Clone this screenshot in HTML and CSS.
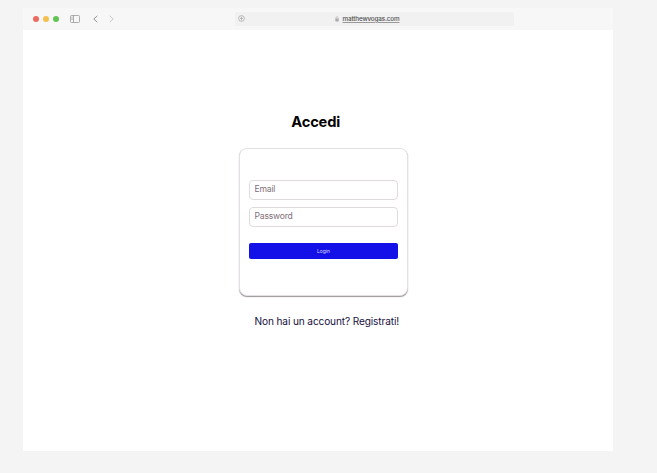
FILE: index.html
```html
<!DOCTYPE html>
<html lang="it">
<head>
<meta charset="utf-8">
<title>Accedi</title>
<link rel="stylesheet" href="styles.css">
</head>
<body>
<div class="window">
  <header class="toolbar">
    <div class="controls">
      <span class="dot red"></span><span class="dot yellow"></span><span class="dot green"></span>
      <svg class="sidebar-icon" width="10" height="8" viewBox="0 0 10 8" fill="none" stroke="#999" stroke-width=".8"><rect x=".5" y=".5" width="9" height="7" rx="1"/><path d="M3.5 .5v7M1.5 2h1M1.5 3.3h1M1.5 4.6h1"/></svg>
      <svg class="back-icon" width="5" height="8" viewBox="0 0 5 8" fill="none" stroke="#888" stroke-width=".9"><path d="M4.3 .8L.8 4l3.5 3.2"/></svg>
      <svg class="forward-icon" width="5" height="8" viewBox="0 0 5 8" fill="none" stroke="#c4c4c4" stroke-width=".9"><path d="M.7 .8L4.2 4 .7 7.2"/></svg>
    </div>
    <div class="address">
      <svg class="shield-icon" width="7" height="7" viewBox="0 0 7 7" fill="none" stroke="#999" stroke-width=".6"><circle cx="3.5" cy="3.5" r="2.9"/><path d="M3.5 1.7v3.6M2 3.4h3"/></svg>
      <svg class="lock-icon" width="4" height="6" viewBox="0 0 4 6"><path d="M1 2.8V1.7a1 1 0 0 1 2 0v1.1" fill="none" stroke="#aaa" stroke-width=".6"/><rect x=".3" y="2.6" width="3.4" height="2.8" rx=".4" fill="#aaa"/></svg>
      <span class="domain">matthewvogas.com</span>
    </div>
  </header>
  <main class="page">
    <h1>Accedi</h1>
    <form class="card">
      <input type="email" placeholder="Email">
      <input type="password" placeholder="Password">
      <button type="button">Login</button>
    </form>
    <p class="register">Non hai un account? Registrati!</p>
  </main>
</div>
</body>
</html>
```
FILE: styles.css
```css
* { box-sizing: border-box; }
body {
  margin: 0;
  height: 473px;
  padding: 8px 0 0 23px;
  overflow: hidden;
  background: #f4f4f4;
  font-family: Inter, sans-serif;
}
.window {
  width: 589.5px;
  height: 443px;
  background: #fff;
  border-radius: 3px 3px 0 0;
  overflow: hidden;
}
.toolbar {
  display: flex;
  height: 22px;
  padding-top: 4px;
  background: #f7f7f7;
}
.controls {
  display: flex;
  align-items: center;
  width: 211.5px;
  height: 14px;
  padding-left: 9.5px;
}
.dot {
  width: 6px;
  height: 6px;
  margin-right: 4px;
  border-radius: 50%;
}
.red { background: #ed6a5e; }
.yellow { background: #f4bf4f; }
.green { background: #61c554; }
.sidebar-icon { margin-left: 7.5px; }
.back-icon { margin-left: 12.5px; }
.forward-icon { margin-left: 11.5px; }
.address {
  display: flex;
  align-items: center;
  width: 279px;
  height: 13.5px;
  padding-left: 3.5px;
  border-radius: 2px;
  background: #f1f1f1;
}
.lock-icon { margin-left: 90px; }
.domain {
  margin-left: 3.5px;
  font-size: 6.3px;
  font-weight: 500;
  line-height: 8px;
  letter-spacing: -0.13px;
  color: #4c4c4c;
  text-decoration: underline;
  text-decoration-color: #999;
  text-decoration-thickness: 0.5px;
  text-underline-offset: 1px;
  white-space: nowrap;
}
.page { padding: 82px 0 0 216px; }
h1 {
  width: 169px;
  margin: 0;
  padding-left: 52.3px;
  font-size: 14.7px;
  font-weight: 700;
  line-height: 20px;
  letter-spacing: -0.2px;
  color: #000;
}
.card {
  display: flex;
  flex-direction: column;
  width: 169px;
  height: 148px;
  margin-top: 16px;
  padding: 31px 9px 0;
  border: 1px solid #e5e0e4;
  border-radius: 8px;
  background: #fff;
  box-shadow: 0 1px 1px #99959a;
}
input {
  width: 100%;
  height: 20px;
  margin: 0 0 7px;
  padding: 0 4.5px 2px;
  border: 1px solid #e0dadd;
  border-radius: 4px;
  outline: 0;
  font: 8.6px/16px Inter, sans-serif;
  letter-spacing: -0.2px;
}
input::placeholder { color: #806f76; opacity: 1; }
button {
  height: 16px;
  margin-top: 9px;
  padding: 0;
  border: 0;
  border-radius: 2px;
  background: #1411e8;
  font: 5px/16px Inter, sans-serif;
  color: #dcdcff;
}
.register {
  margin: 16px 0 0 15.5px;
  font-size: 10.1px;
  line-height: 18px;
  letter-spacing: -0.12px;
  color: #17103f;
  white-space: nowrap;
}
```
